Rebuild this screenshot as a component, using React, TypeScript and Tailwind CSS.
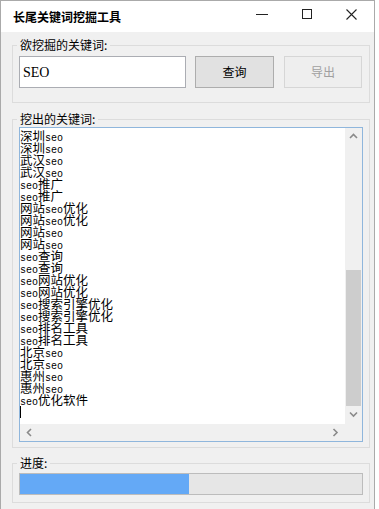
import React from "react";

const LINES = [
  "深圳seo", "深圳seo", "武汉seo", "武汉seo", "seo推广", "seo推广",
  "网站seo优化", "网站seo优化", "网站seo", "网站seo", "seo查询", "seo查询",
  "seo网站优化", "seo网站优化", "seo搜索引擎优化", "seo搜索引擎优化",
  "seo排名工具", "seo排名工具", "北京seo", "北京seo", "惠州seo", "惠州seo",
  "seo优化软件",
];

function Line({ text }: { text: string }) {
  const parts = text.split(/(seo)/).filter((p) => p.length > 0);
  return (
    <div className="h-[12px] leading-[12px] whitespace-nowrap">
      {parts.map((p, i) =>
        p === "seo" ? (
          <span key={i} className="text-[10px] font-['Liberation_Mono',monospace]">
            {p}
          </span>
        ) : (
          <span key={i} className="text-[12.5px] font-['Noto_Sans_CJK_SC',sans-serif]">
            {p}
          </span>
        )
      )}
    </div>
  );
}

function Chevron({ dir }: { dir: "up" | "down" | "left" | "right" }) {
  const d =
    dir === "up"
      ? "M1 5 L4.5 1.5 L8 5"
      : dir === "down"
      ? "M1 1.5 L4.5 5 L8 1.5"
      : dir === "left"
      ? "M5 1 L1.5 4.5 L5 8"
      : "M1.5 1 L5 4.5 L1.5 8";
  const w = dir === "up" || dir === "down" ? 9 : 7;
  const h = dir === "up" || dir === "down" ? 7 : 9;
  return (
    <svg width={w} height={h} viewBox={`0 0 ${w} ${h}`}>
      <path d={d} fill="none" stroke="#8a8a8a" strokeWidth="1.6" />
    </svg>
  );
}

export default function App() {
  return (
    <div className="w-[379px] h-[509px] bg-white font-['Noto_Sans_CJK_SC',sans-serif] text-[12px] text-black">
      <div className="w-[375px] h-[509px] border-l border-r border-t border-[#aaaaaa] flex flex-col">
        {/* Title bar */}
        <div className="h-[31px] bg-white flex items-start shrink-0">
          <div className="pl-[12px] pt-[9px] text-[12px] leading-[14px] font-bold flex-1">
            长尾关键词挖掘工具
          </div>
          <div className="flex h-[26px]">
            <div className="w-[45px] h-[26px] flex items-center justify-center">
              <div className="w-[12px] h-px bg-[#222]" />
            </div>
            <div className="w-[45px] h-[26px] flex items-center justify-center">
              <div className="w-[10px] h-[10px] border border-[#222]" />
            </div>
            <div className="w-[45px] h-[26px] flex items-center justify-center">
              <svg width="11" height="11" viewBox="0 0 11 11">
                <path d="M0.5 0.5 L10.5 10.5 M10.5 0.5 L0.5 10.5" stroke="#222" strokeWidth="1.1" />
              </svg>
            </div>
          </div>
        </div>

        {/* Body */}
        <div className="flex-1 bg-[#f0f0f0] pl-[11px] pr-[4px] pt-[6px] flex flex-col">
          {/* Group 1 */}
          <fieldset className="border border-[#dcdcdc] w-[358px] pl-[6px] pr-[6px] pt-[4px] pb-[14px]">
            <legend className="ml-[-2px] px-[3px] leading-[14px] text-[12px]">欲挖掘的关键词:</legend>
            <div className="flex items-start">
              <div className="w-[167px] h-[32px] bg-white border border-[#abadb3] flex items-center pl-[3px] text-[14px] font-['Liberation_Serif',serif]">
                SEO
              </div>
              <div className="ml-[9px] w-[79px] h-[32px] bg-[#e1e1e1] border border-[#adadad] flex items-center justify-center text-[12px]">
                查询
              </div>
              <div className="ml-[10px] w-[78px] h-[32px] bg-[#eeeeee] border border-[#d6d6d6] flex items-center justify-center text-[12px] text-[#a0a0a0]">
                导出
              </div>
            </div>
          </fieldset>

          {/* Group 2 */}
          <fieldset className="mt-[9px] border border-[#dcdcdc] w-[358px] pl-[6px] pr-[6px] pt-[1px] pb-[5px]">
            <legend className="ml-[-2px] px-[3px] leading-[14px] text-[12px]">挖出的关键词:</legend>
            <div className="w-[344px] h-[315px] border border-[#8fb6dc] bg-white flex flex-col">
              <div className="flex h-[296px]">
                <div className="flex-1 overflow-hidden pt-[2px] text-black">
                  {LINES.map((l, i) => (
                    <Line key={i} text={l} />
                  ))}
                  <div className="h-[12px] flex items-start">
                    <div className="w-px h-[12px] bg-black" />
                  </div>
                </div>
                <div className="w-[17px] h-[296px] bg-[#f0f0f0] flex flex-col items-center">
                  <div className="h-[17px] w-full flex items-center justify-center">
                    <Chevron dir="up" />
                  </div>
                  <div className="h-[125px] w-full" />
                  <div className="h-[136px] w-[15px] bg-[#cdcdcd]" />
                  <div className="h-[17px] w-full flex items-center justify-center">
                    <Chevron dir="down" />
                  </div>
                </div>
              </div>
              <div className="flex h-[17px]">
                <div className="flex-1 bg-[#f0f0f0] flex items-center justify-between px-[6px]">
                  <Chevron dir="left" />
                  <Chevron dir="right" />
                </div>
                <div className="w-[17px] bg-[#f0f0f0]" />
              </div>
            </div>
          </fieldset>

          {/* Group 3 */}
          <fieldset className="mt-[8px] border border-[#dcdcdc] w-[358px] pl-[6px] pr-[6px] pt-[3px] pb-[7px]">
            <legend className="ml-[-2px] px-[3px] leading-[14px] text-[12px]">进度:</legend>
            <div className="w-[344px] h-[22px] border border-[#bcbcbc] bg-[#e6e6e6] flex">
              <div className="w-[169px] h-full bg-[#64a9f6]" />
            </div>
          </fieldset>
        </div>
      </div>
    </div>
  );
}
